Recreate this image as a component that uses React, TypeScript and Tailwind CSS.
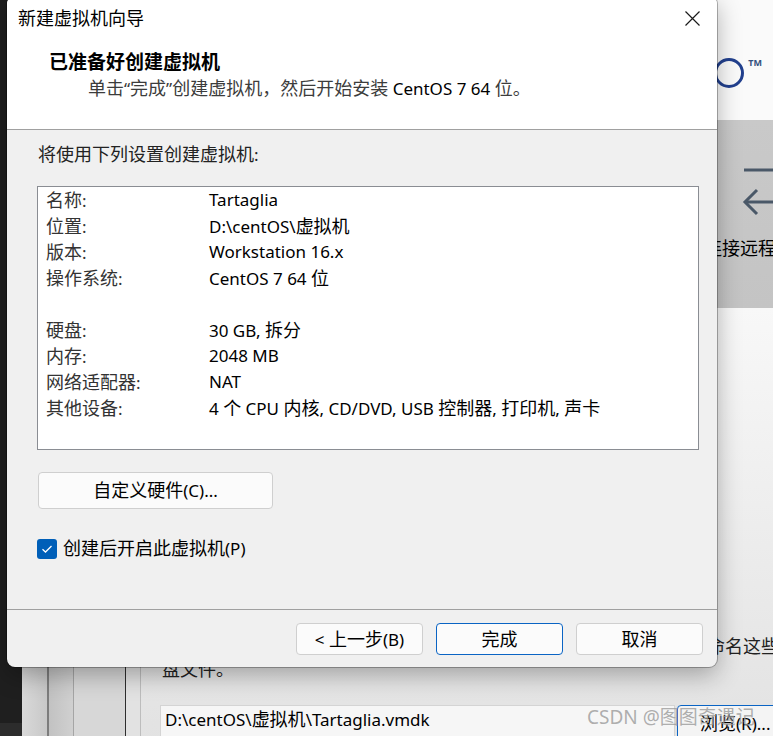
import React from "react";

function T({ s }: { s: string }) {
  const parts = s.split(/([\u3000-\u303f\u4e00-\u9fff\uff00-\uffef]+)/);
  return (
    <span className="whitespace-pre">
      {parts.map((p, i) =>
        /[\u3000-\u303f\u4e00-\u9fff\uff00-\uffef]/.test(p) ? (
          <span key={i} className="text-[18px]">
            {p}
          </span>
        ) : (
          <React.Fragment key={i}>{p}</React.Fragment>
        )
      )}
    </span>
  );
}

export default function App() {
  const rows: [string, string][] = [
    ["名称:", "Tartaglia"],
    ["位置:", "D:\\centOS\\虚拟机"],
    ["版本:", "Workstation 16.x"],
    ["操作系统:", "CentOS 7 64 位"],
    ["", ""],
    ["硬盘:", "30 GB, 拆分"],
    ["内存:", "2048 MB"],
    ["网络适配器:", "NAT"],
    ["其他设备:", "4 个 CPU 内核, CD/DVD, USB 控制器, 打印机, 声卡"],
  ];
  return (
    <div className="relative w-[773px] h-[736px] overflow-hidden bg-[#e6e6e6] font-['Noto_Sans','Noto_Sans_CJK_SC',sans-serif] text-[17px] text-black">
      {/* background application window */}
      <div className="flex h-full">
        <div className="w-[22px] flex flex-col bg-[#1f1f1f]">
          <div className="flex-1" />
          <div className="h-[13px] bg-[#2c2c2c]" />
        </div>
        <div className="w-[25px] bg-gradient-to-r from-[#d9d9d9] to-[#c8c8c8]" />
        <div className="w-[2px] bg-[#7d7d7d]" />
        <div className="w-[24px] bg-gradient-to-r from-[#c2c2c2] to-[#d0d0d0]" />
        <div className="w-[1px] bg-[#a5a5a5]" />
        <div className="w-[51px] bg-[#d7d7d7]" />
        <div className="w-[1px] bg-[#2e2e2e]" />
        <div className="w-[14px] bg-[#e2e2e2]" />
        <div className="w-[1px] bg-[#bdbdbd]" />
        <div className="flex-1 flex flex-col min-w-0">
          <div className="h-[120px] shrink-0 bg-[#fafafa] flex justify-end items-start pr-[11px] pt-[58px] gap-[4px]">
            <div className="w-[30px] h-[30px] rounded-full border-[3.5px] border-[#22408e]" />
            <div className="text-[9px] leading-none font-bold text-[#34507e]">TM</div>
          </div>
          <div className="h-[188px] shrink-0 bg-gradient-to-b from-[#c9c9c9] to-[#c4c4c4] flex justify-end">
            <div className="w-[69px] shrink-0 pt-[40px]">
              <svg width="69" height="60" viewBox="0 0 69 60" fill="none">
                <line x1="40" y1="10" x2="69" y2="10" stroke="#4a5868" strokeWidth="3" />
                <line x1="42" y1="42" x2="69" y2="42" stroke="#4a5868" strokeWidth="3" />
                <polyline points="53,30 41,42 53,54" stroke="#4a5868" strokeWidth="3" fill="none" />
              </svg>
              <div className="mt-[15px] leading-[26px] whitespace-nowrap text-[18px]">连接远程服务器</div>
            </div>
          </div>
          <div className="flex-1 bg-gradient-to-b from-[#f8f8f8] to-[#e2e2e2] flex flex-col pt-[327px]">
            <div className="leading-[23px] whitespace-nowrap text-[#222] text-[18px]">
              <div className="pl-[566px]">命名这些磁</div>
              <div className="pl-[21px]">盘文件。</div>
            </div>
            <div className="mt-[24px] pl-[19px] flex gap-[2px]">
              <div className="w-[515px] shrink-0 h-[40px] bg-[#f6f6f6] border border-[#d4d4d4] pl-[4px] leading-[26px] whitespace-nowrap">
                <T s="D:\centOS\虚拟机\Tartaglia.vmdk" />
              </div>
              <div className="w-[110px] shrink-0 h-[40px] border border-[#0a64c4] rounded-[4px] bg-[#f4f4f4] pl-[22px] pt-[4px] leading-[26px] whitespace-nowrap">
                <T s="浏览(R)..." />
              </div>
            </div>
          </div>
        </div>
      </div>

      {/* watermark */}
      <div className="absolute left-[587px] top-[704px] text-[19px] leading-[26px] text-[#9a9a9a]/80 whitespace-nowrap">
        CSDN @图图奇遇记
      </div>

      {/* dialog */}
      <div className="absolute left-[7px] top-[-4px] w-[710px] h-[671px] rounded-[8px] bg-[#f0f0f0] shadow-[0_0_0_1px_rgba(0,0,0,0.28),0_8px_24px_rgba(0,0,0,0.3)] flex flex-col overflow-hidden">
        <div className="bg-white flex flex-col pb-[27px] border-b border-[#a0a0a0]">
          <div className="h-[44px] flex items-center justify-between pl-[11px] pr-[17px]">
            <div className="text-[18px] leading-[24px]">新建虚拟机向导</div>
            <svg width="15" height="15" viewBox="0 0 15 15">
              <path d="M0.5 0.5 L14.5 14.5 M14.5 0.5 L0.5 14.5" stroke="#1a1a1a" strokeWidth="1.2" />
            </svg>
          </div>
          <div className="pl-[42px] mt-[9px] text-[19px] font-bold leading-[26px]">已准备好创建虚拟机</div>
          <div className="pl-[81px] leading-[26px] text-[#3c3c3c]">
            <T s="单击“完成”创建虚拟机，然后开始安装 " />
            <span className="text-black">CentOS 7 64</span> <T s="位。" />
          </div>
        </div>

        <div className="flex-1 pl-[30px] pr-[18px] pt-[11px] flex flex-col items-start">
          <div className="pl-[1px] leading-[26px] text-[#222]">
            <T s="将使用下列设置创建虚拟机:" />
          </div>
          <div className="mt-[18px] self-stretch h-[264px] bg-white border border-[#8a8d93] pl-[8px]">
            {rows.map(([k, v], i) => (
              <div key={i} className="flex h-[26px] items-center whitespace-nowrap">
                <div className="w-[163px] shrink-0 text-[#333]">
                  <T s={k} />
                </div>
                <div>
                  <T s={v} />
                </div>
              </div>
            ))}
          </div>
          <div className="mt-[22px] ml-[1px] w-[235px] h-[37px] rounded-[4px] border border-[#cfcfcf] bg-[#fbfbfb] flex items-center justify-center">
            <T s="自定义硬件(C)..." />
          </div>
          <div className="mt-[26px] flex items-center gap-[6px]">
            <div className="w-[20px] h-[20px] rounded-[3px] bg-[#005fb8] flex items-center justify-center">
              <svg width="12" height="10" viewBox="0 0 12 10" fill="none">
                <path d="M1.5 5.2 L4.5 8 L10.5 2" stroke="white" strokeWidth="1.3" />
              </svg>
            </div>
            <div className="leading-[26px]">
              <T s="创建后开启此虚拟机(P)" />
            </div>
          </div>
        </div>

        <div className="h-[58px] shrink-0 border-t border-[#a0a0a0] pt-[13px] pr-[14px] flex justify-end items-start gap-[13px]">
          <div className="w-[127px] h-[32px] rounded-[4px] border border-[#cfcfcf] bg-[#fbfbfb] flex items-center justify-center">
            <T s="< 上一步(B)" />
          </div>
          <div className="w-[127px] h-[32px] rounded-[4px] border border-[#0a64c4] bg-[#fbfbfb] flex items-center justify-center">
            <T s="完成" />
          </div>
          <div className="w-[127px] h-[32px] rounded-[4px] border border-[#cfcfcf] bg-[#fbfbfb] flex items-center justify-center">
            <T s="取消" />
          </div>
        </div>
      </div>
    </div>
  );
}
